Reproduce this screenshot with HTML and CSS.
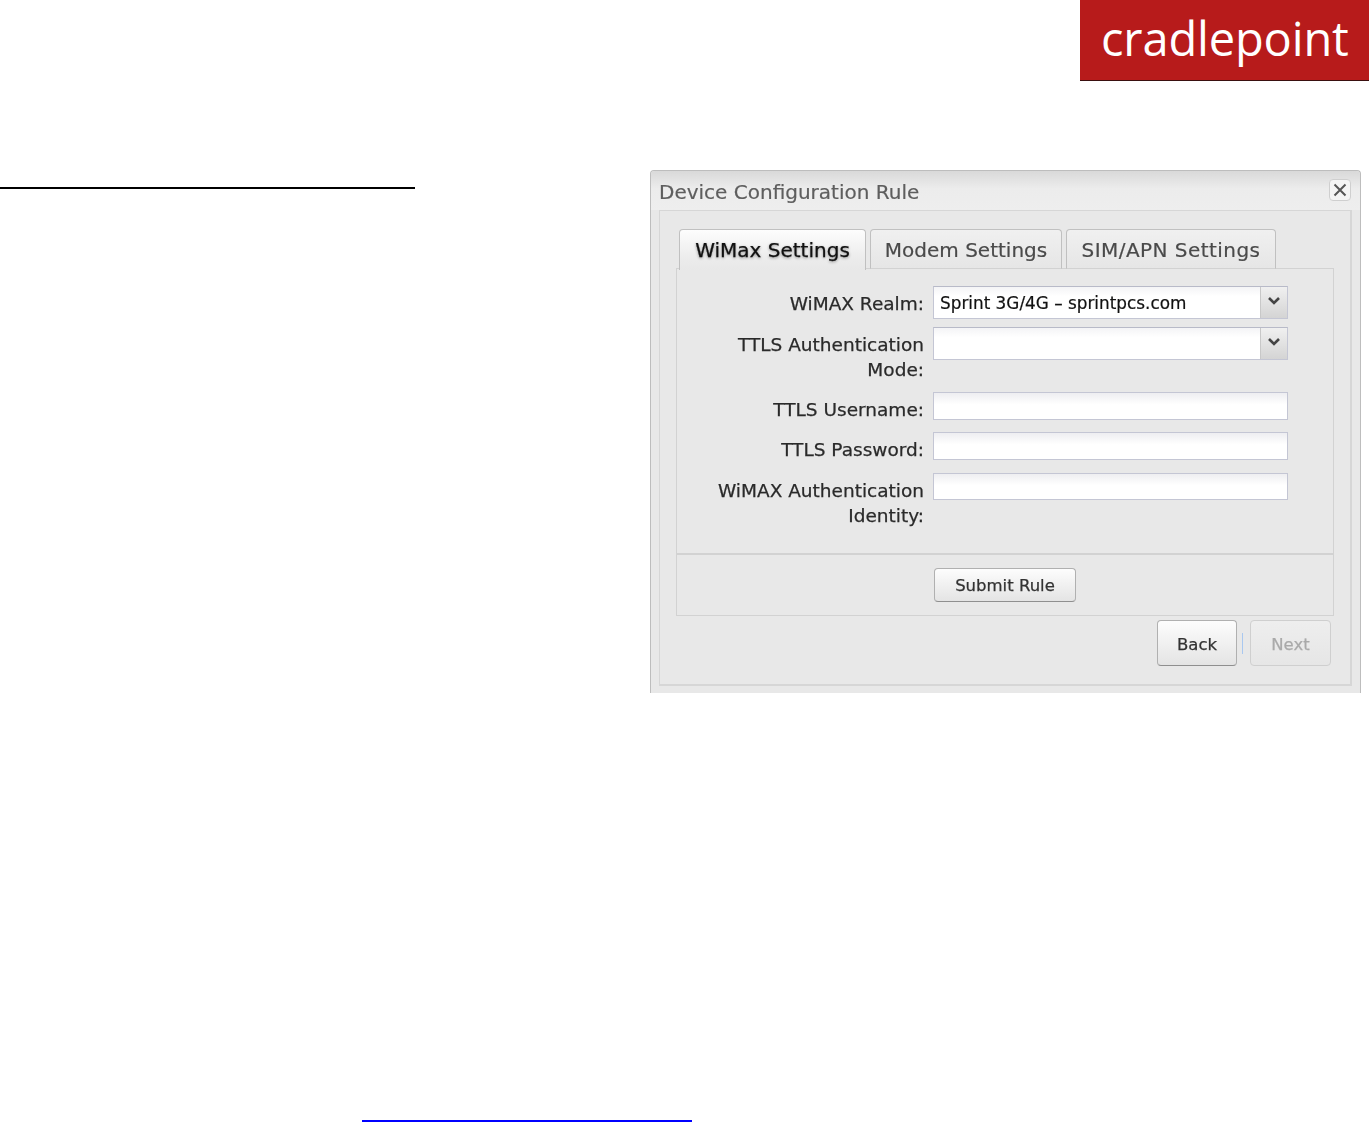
FILE: index.html
```html
<!DOCTYPE html>
<html lang="en">
<head>
<meta charset="utf-8">
<title>Device Configuration Rule</title>
<link rel="stylesheet" href="styles.css">
</head>
<body>
<header class="page-header">
  <div class="logo">cradlepoint</div>
</header>
<main class="main">
  <div class="heading-rule"></div>
  <section class="dialog">
    <div class="dialog-header">
      <span class="dialog-title">Device Configuration Rule</span>
      <button class="close-btn" aria-label="Close">
        <svg width="14" height="14" viewBox="0 0 14 14"><path d="M1.5 1.5 L12.5 12.5 M12.5 1.5 L1.5 12.5" stroke="#555" stroke-width="2" fill="none"/></svg>
      </button>
    </div>
    <div class="frame">
      <div class="tabs">
        <div class="tab tab-active tab-1">WiMax Settings</div>
        <div class="tab tab-2">Modem Settings</div>
        <div class="tab tab-3">SIM/APN Settings</div>
      </div>
      <div class="panel">
        <form class="fields">
          <label class="field-label">WiMAX Realm:</label>
          <div class="combo">
            <span class="combo-value">Sprint 3G/4G – sprintpcs.com</span>
            <span class="combo-arrow"><svg width="14" height="10" viewBox="0 0 14 10"><path d="M2 2 L7 7 L12 2" stroke="#444" stroke-width="2.6" fill="none"/></svg></span>
          </div>
          <label class="field-label">TTLS Authentication<br>Mode:</label>
          <div class="combo">
            <span class="combo-value"></span>
            <span class="combo-arrow"><svg width="14" height="10" viewBox="0 0 14 10"><path d="M2 2 L7 7 L12 2" stroke="#444" stroke-width="2.6" fill="none"/></svg></span>
          </div>
          <label class="field-label">TTLS Username:</label>
          <input class="text-input" type="text">
          <label class="field-label">TTLS Password:</label>
          <input class="text-input" type="text">
          <label class="field-label">WiMAX Authentication<br>Identity:</label>
          <input class="text-input" type="text">
        </form>
        <div class="panel-footer">
          <button class="btn submit-btn">Submit Rule</button>
        </div>
      </div>
      <div class="nav">
        <button class="btn nav-btn">Back</button>
        <span class="focus-bar"></span>
        <button class="btn nav-btn nav-next">Next</button>
      </div>
    </div>
  </section>
</main>
<a class="footer-link" href="#"></a>
</body>
</html>
```
FILE: styles.css
```css
* { box-sizing: border-box; }
html, body { margin: 0; padding: 0; background: #fff; }
body { width: 1369px; height: 1122px; overflow: hidden; font-family: "DejaVu Sans", sans-serif; }

.page-header { display: flex; justify-content: flex-end; }
.logo {
  width: 289px; height: 81px;
  background: #b71b1b;
  border-bottom: 1px solid #3a1010;
  color: #fff;
  font-family: "Open Sans", sans-serif;
  font-weight: 400;
  font-size: 47px;
  line-height: 76px;
  letter-spacing: -0.15px;
  padding-left: 21px;
  white-space: nowrap;
}

.main { display: flex; justify-content: space-between; align-items: flex-start; padding-top: 89px; padding-right: 8px; }
.heading-rule { width: 415px; height: 2px; margin-top: 17px; background: #000; }

.dialog {
  width: 711px; height: 523px;
  border: 1px solid #bdbdbd;
  border-bottom: 0;
  border-radius: 4px 4px 0 0;
  background: #e8e8e8;
  padding: 0 8px;
  filter: blur(0.4px);
}
.dialog-header {
  height: 39px;
  margin: 0 -8px;
  padding: 8px 9px 0 8px;
  display: flex; justify-content: space-between; align-items: flex-start;
  background: linear-gradient(#d9d9d9, #ececec 45%, #eeeeee);
  border-radius: 4px 4px 0 0;
}
.dialog-title { font-size: 20px; line-height: 26px; color: #5e5e5e; -webkit-text-stroke: 0.2px #5e5e5e; }
.close-btn {
  width: 22px; height: 22px; padding: 0;
  display: flex; align-items: center; justify-content: center;
  background: #f4f4f4;
  border: 1px solid #cfcfcf;
  border-radius: 4px;
}

.frame {
  height: 476px;
  border: 2px solid #d6d6d6;
  border-width: 1px 2px 2px 1px;
  padding: 18px 16px 0 16px;
  background: #e8e8e8;
}

.tabs { display: flex; gap: 4px; padding-left: 3px; height: 40px; position: relative; z-index: 1; }
.tab {
  height: 40px;
  border: 1px solid #c0c0c0;
  border-bottom: 1px solid #d2d2d2;
  border-radius: 4px 4px 0 0;
  background: linear-gradient(#f0f0f0, #e6e6e6);
  font-size: 20px;
  line-height: 41px;
  text-align: center;
  color: #4a4a4a;
  -webkit-text-stroke: 0.2px #4a4a4a;
}
.tab-1 { width: 187px; }
.tab-2 { width: 192px; }
.tab-3 { width: 210px; letter-spacing: 0.45px; }
.tab-active {
  color: #111;
  -webkit-text-stroke: 0.25px #111;
  border-bottom: 0;
  height: 41px;
  background: linear-gradient(#fdfdfd, #ececec 70%, #e8e8e8);
  text-shadow: 0 1px 3px rgba(0,0,0,.45);
}

.panel {
  margin-top: -1px;
  height: 348px;
  border: 1px solid #d2d2d2;
  background: #e8e8e8;
}
.fields {
  height: 285.5px;
  padding: 17px 0 0;
  margin: 0;
  display: grid;
  grid-template-columns: 247px 355px;
  column-gap: 9px;
  row-gap: 8px;
  align-content: start;
  align-items: start;
  justify-content: start;
  border-bottom: 2px solid #d2d2d2;
}
.field-label {
  font-size: 18.5px;
  line-height: 25px;
  padding: 5px 0 2.2px;
  text-align: right;
  color: #2a2a2a;
  -webkit-text-stroke: 0.25px #2a2a2a;
  white-space: nowrap;
}
.combo {
  height: 33px;
  display: flex;
  border: 1px solid #c4c6d4;
  border-top-color: #b8bac8;
  background: linear-gradient(#f4f4f6, #fff 30%);
}
.combo-value { flex: 1; font-size: 16.85px; line-height: 32px; padding-left: 6px; color: #111; -webkit-text-stroke: 0.2px #111; }
.combo-arrow {
  width: 27px;
  display: flex; align-items: center; justify-content: center;
  padding-bottom: 3px;
  border-left: 1px solid #c8c8c8;
  background: linear-gradient(#f0f0f0, #d4d4d4);
}
.text-input {
  display: block;
  width: 355px; height: 27.5px;
  padding: 0;
  border: 1px solid #c4c6d4;
  border-radius: 0;
  outline: 0;
  background: linear-gradient(#eeeef1, #fff 45%);
}

.panel-footer { display: flex; padding: 13px 0 0 257px; }
.btn {
  font-family: "DejaVu Sans", sans-serif;
  color: #333;
  padding: 1px 0 0;
  border: 1px solid #b0b0b0;
  border-bottom-color: #8f8f8f;
  border-radius: 4px;
  background: linear-gradient(#fdfdfd, #e4e4e4);
  -webkit-text-stroke: 0.25px currentColor;
}
.submit-btn { width: 142px; height: 34px; font-size: 16.5px; }

.nav { display: flex; justify-content: flex-end; align-items: center; padding: 4px 3px 0 0; }
.nav-btn { width: 80px; height: 46px; font-size: 16.5px; padding-top: 3px; }
.nav-next { width: 81px; color: #aaa; border-color: #cfcfcf; background: linear-gradient(#eeeeee, #e6e6e6); }
.focus-bar { width: 1px; height: 21px; margin: 0 7px 0 5px; background: #a9c8f0; }

.footer-link {
  display: block;
  width: 330px; height: 2px;
  margin: 427px 0 0 362px;
  background: #0000ff;
}
```
